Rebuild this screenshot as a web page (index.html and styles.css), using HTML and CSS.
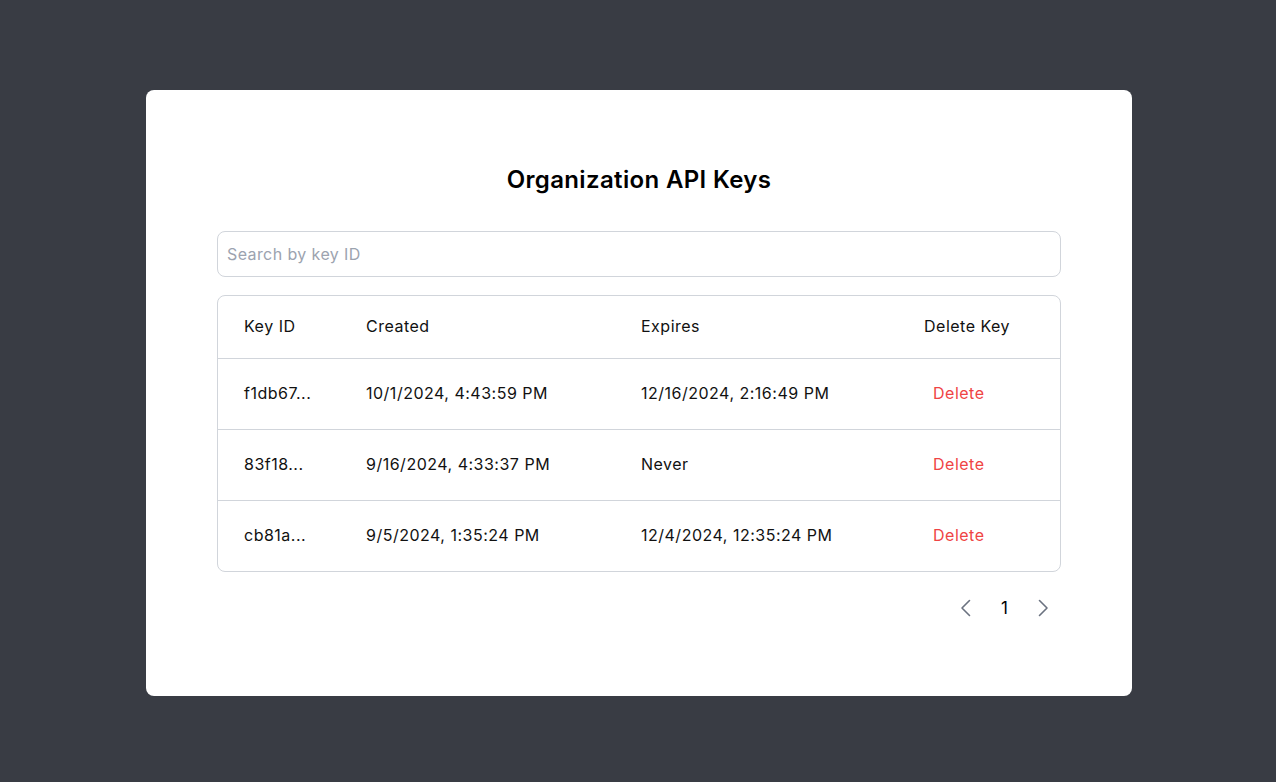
FILE: index.html
```html
<!DOCTYPE html>
<html lang="en">
<head>
<meta charset="utf-8">
<title>Organization API Keys</title>
<link rel="stylesheet" href="styles.css">
</head>
<body>
<main class="card">
  <h1 class="title">Organization API Keys</h1>
  <input class="search" type="text" placeholder="Search by key ID">
  <div class="table">
    <div class="row head">
      <div class="cell">Key ID</div>
      <div class="cell">Created</div>
      <div class="cell">Expires</div>
      <div class="cell">Delete Key</div>
    </div>
    <div class="row">
      <div class="cell">f1db67...</div>
      <div class="cell">10/1/2024, 4:43:59 PM</div>
      <div class="cell">12/16/2024, 2:16:49 PM</div>
      <div class="cell"><button class="del">Delete</button></div>
    </div>
    <div class="row">
      <div class="cell">83f18...</div>
      <div class="cell">9/16/2024, 4:33:37 PM</div>
      <div class="cell">Never</div>
      <div class="cell"><button class="del">Delete</button></div>
    </div>
    <div class="row">
      <div class="cell">cb81a...</div>
      <div class="cell">9/5/2024, 1:35:24 PM</div>
      <div class="cell">12/4/2024, 12:35:24 PM</div>
      <div class="cell"><button class="del">Delete</button></div>
    </div>
  </div>
  <nav class="pager">
    <button class="arrow" aria-label="Previous">
      <svg width="20" height="20" viewBox="0 0 20 20"><path d="M13.5 2.5 L6 10 L13.5 17.5" fill="none" stroke="#6b7280" stroke-width="1.6" stroke-linecap="round" stroke-linejoin="round"/></svg>
    </button>
    <span class="page">1</span>
    <button class="arrow" aria-label="Next">
      <svg width="20" height="20" viewBox="0 0 20 20"><path d="M6.5 2.5 L14 10 L6.5 17.5" fill="none" stroke="#6b7280" stroke-width="1.6" stroke-linecap="round" stroke-linejoin="round"/></svg>
    </button>
  </nav>
</main>
</body>
</html>
```

FILE: styles.css
```css
* { box-sizing: border-box; }
html, body { margin: 0; padding: 0; }
body {
  background: #393c44;
  font-family: Inter, "Noto Sans", sans-serif;
  color: #111;
  min-height: 782px;
  padding-top: 90px;
}
.card {
  width: 986px;
  height: 606px;
  margin: 0 0 0 146px;
  background: #fff;
  border-radius: 8px;
  padding: 65px 71px 0 71px;
  display: flex;
  flex-direction: column;
}
.title {
  margin: 0;
  text-align: center;
  font-size: 24px;
  font-weight: 600;
  line-height: 49px;
  letter-spacing: 0.35px;
  color: #000;
}
.search {
  margin-top: 27px;
  height: 46px;
  width: 100%;
  border: 1px solid #d1d5db;
  border-radius: 8px;
  padding: 0 9px;
  font-family: inherit;
  font-size: 16px;
  letter-spacing: 0.4px;
  color: #111;
  outline: none;
}
.search::placeholder { color: #9ca3af; }
.table {
  margin-top: 18px;
  border: 1px solid #d1d5db;
  border-radius: 8px;
  overflow: hidden;
}
.row {
  display: grid;
  grid-template-columns: 122px 275px 283px 1fr;
  height: 71px;
  align-items: center;
  border-top: 1px solid #d1d5db;
  font-size: 16px;
  letter-spacing: 0.5px;
}
.row.head { height: 62px; border-top: none; padding-bottom: 2px; }
.row:not(.head) { padding-bottom: 3px; }
.cell { padding-left: 26px; white-space: nowrap; }
.del {
  background: none;
  border: none;
  padding: 0 0 0 9px;
  font-family: inherit;
  font-size: 16px;
  letter-spacing: 0.5px;
  color: #ef4444;
  cursor: pointer;
}
.pager {
  display: flex;
  justify-content: flex-end;
  align-items: center;
  gap: 25px;
  margin-top: 24px;
  padding-right: 8px;
  height: 24px;
}
.arrow {
  background: none;
  border: none;
  padding: 0;
  display: flex;
  align-items: center;
}
.page { font-size: 17px; font-weight: 400; color: #000; }
```
